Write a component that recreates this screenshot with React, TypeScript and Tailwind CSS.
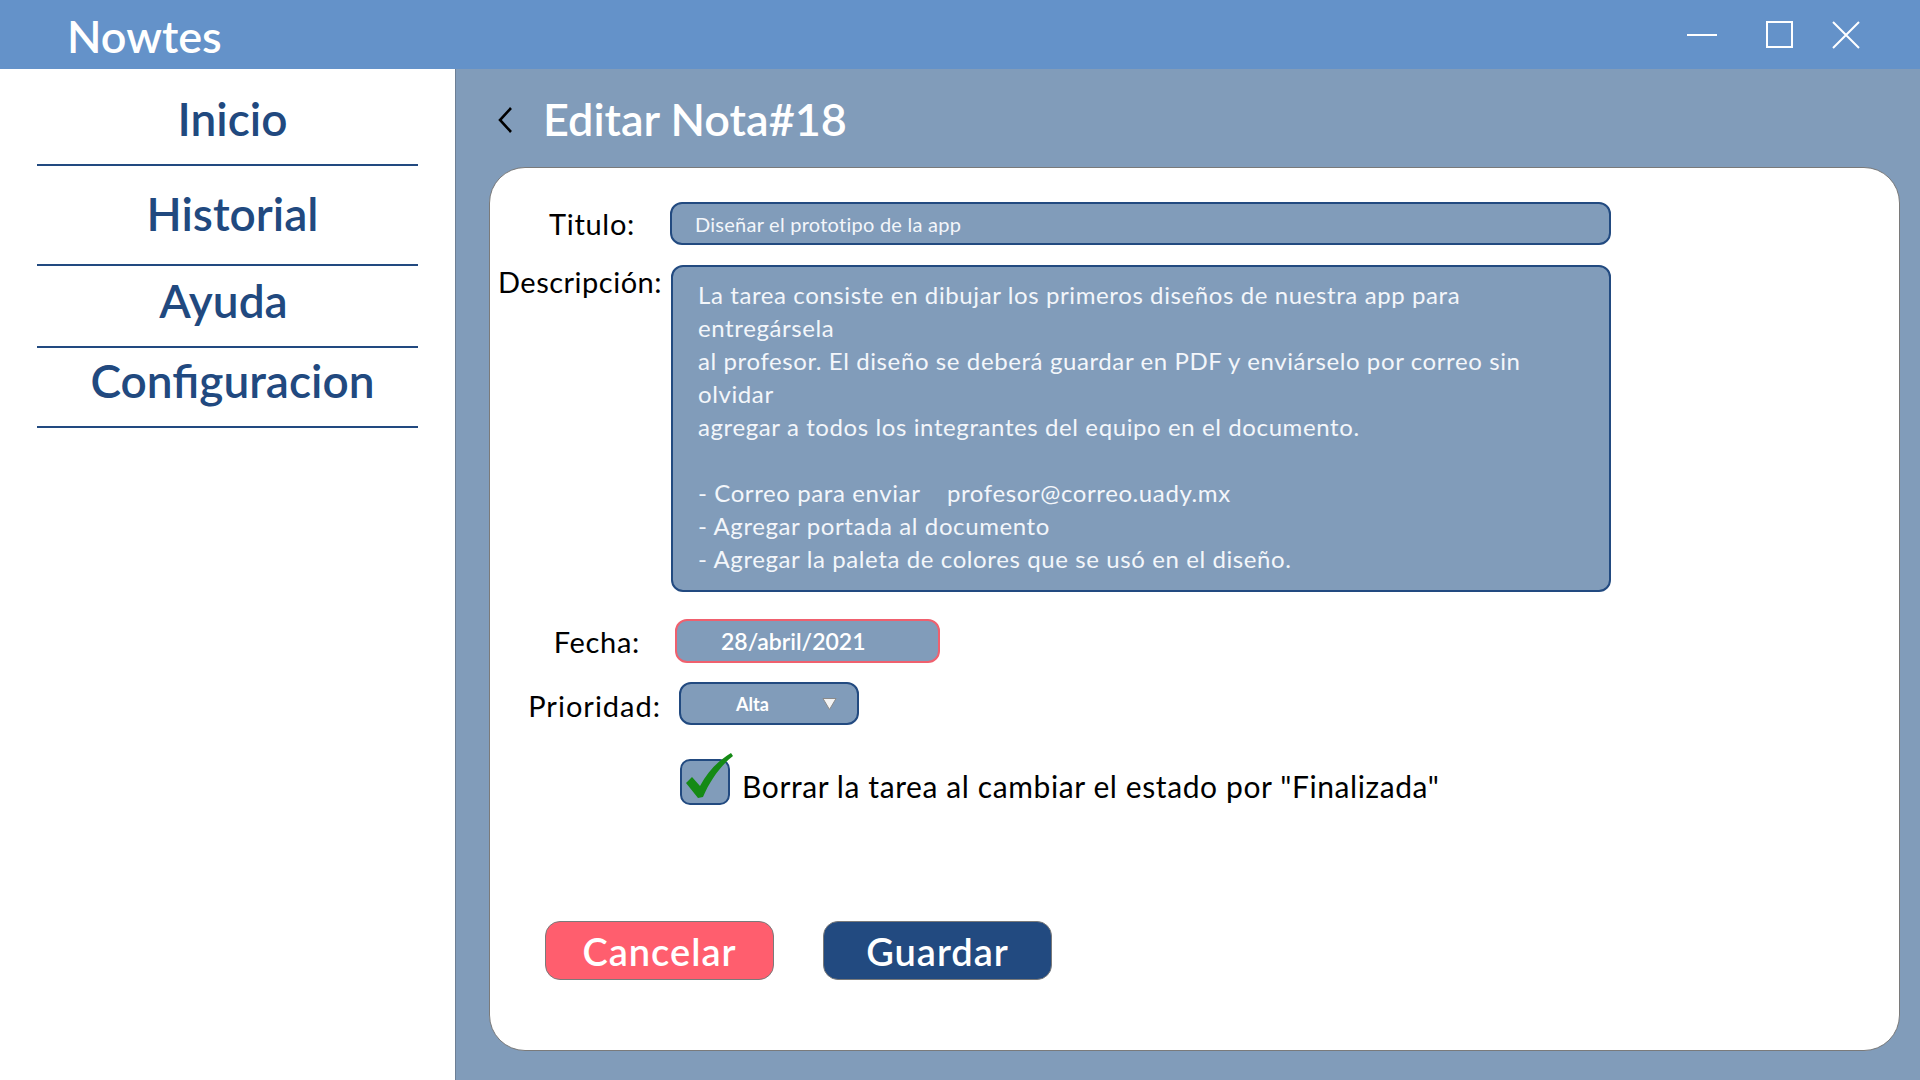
import React from 'react'

const navItems = [
  { label: 'Inicio', cls: 'pt-[27px] pb-[22px]' },
  { label: 'Historial', cls: 'pt-[25px] pb-[27px]' },
  { label: 'Ayuda', cls: 'pt-[12px] pb-[22px] pr-[18px]' },
  { label: 'Configuracion', cls: 'pt-[10px] pb-[22px]' },
]

const descLines = [
  'La tarea consiste en dibujar los primeros diseños de nuestra app para',
  'entregársela',
  'al profesor. El diseño se deberá guardar en PDF y enviárselo por correo sin',
  'olvidar',
  'agregar a todos los integrantes del equipo en el documento.',
  '',
  '- Correo para enviar\u00a0\u00a0\u00a0\u00a0profesor@correo.uady.mx',
  '- Agregar portada al documento',
  '- Agregar la paleta de colores que se usó en el diseño.',
]

function WindowControls() {
  return (
    <div className="flex items-center h-full">
      <svg width="32" height="4" viewBox="0 0 32 4" aria-hidden>
        <line x1="1" y1="2" x2="31" y2="2" stroke="white" strokeWidth="2" />
      </svg>
      <svg className="ml-[48px]" width="27" height="27" viewBox="0 0 27 27" aria-hidden>
        <rect x="1" y="1" width="25" height="25" fill="none" stroke="white" strokeWidth="2" />
      </svg>
      <svg className="ml-[39px] mr-[60px]" width="28" height="28" viewBox="0 0 28 28" aria-hidden>
        <path d="M1 1L27 27M27 1L1 27" stroke="white" strokeWidth="2" />
      </svg>
    </div>
  )
}

function Sidebar() {
  return (
    <aside className="w-[455px] bg-white shrink-0">
      <nav className="mx-[37px]">
        {navItems.map((item) => (
          <div
            key={item.label}
            className={`${item.cls} pl-[10px] border-b-2 border-[#224a80] text-center text-[46px] leading-[46px] font-semibold text-[#21497f]`}
          >
            {item.label}
          </div>
        ))}
      </nav>
    </aside>
  )
}

export default function App() {
  return (
    <div className="w-[1920px] h-[1080px] flex flex-col overflow-hidden font-['Lato',sans-serif]">
      <header className="h-[69px] bg-[#6492c9] flex items-center justify-between shrink-0">
        <span className="ml-[67px] mt-[4px] text-[45px] leading-none font-semibold text-white">Nowtes</span>
        <WindowControls />
      </header>

      <div className="flex flex-1 min-h-0">
        <Sidebar />

        <main className="flex-1 flex flex-col bg-[#819cba] border-l border-[#6d7f95] pl-[33px] pr-[20px] pb-[29px]">
          <div className="h-[98px] flex items-center shrink-0">
            <svg className="ml-[7px] mt-[4px]" width="19" height="28" viewBox="0 0 19 28" aria-hidden>
              <path d="M15 2L4 14L15 26" fill="none" stroke="black" strokeWidth="2.6" />
            </svg>
            <h1 className="ml-[28px] mt-[2px] text-[45px] leading-none font-semibold text-white">Editar Nota#18</h1>
          </div>

          <section className="flex-1 bg-white border border-[#7a7a7a] rounded-[36px] pt-[34px]">
            <div className="flex items-start">
              <label className="w-[180px] pr-[35px] text-right text-[29px] leading-[29px] tracking-[0.7px] text-black mt-[7px]">
                Titulo:
              </label>
              <div className="w-[941px] h-[43px] rounded-[12px] border-2 border-[#224a80] bg-[#819cba] flex items-center pl-[23px] text-[20px] leading-[20px] tracking-[0.25px] text-[#f3f6fa]">
                Diseñar el prototipo de la app
              </div>
            </div>

            <div className="flex items-start mt-[20px]">
              <label className="w-[181px] pl-[8px] text-left text-[29px] leading-[29px] tracking-[0.5px] text-black mt-[2px]">
                Descripción:
              </label>
              <div className="w-[940px] h-[327px] rounded-[12px] border-2 border-[#224a80] bg-[#819cba] pl-[25px] pt-[11px] text-[24px] leading-[33px] tracking-[0.6px] text-[#f3f6fa]">
                {descLines.map((line, i) => (
                  <div key={i} className="h-[33px] whitespace-pre">
                    {line}
                  </div>
                ))}
              </div>
            </div>

            <div className="flex items-start mt-[27px]">
              <label className="w-[185px] pr-[35px] text-right text-[29px] leading-[29px] tracking-[0.7px] text-black mt-[8px]">
                Fecha:
              </label>
              <div className="w-[265px] h-[44px] rounded-[12px] border-2 border-[#f0606e] bg-[#819cba] flex items-center pl-[44px] text-[23px] leading-[23px] font-semibold text-white">
                28/abril/2021
              </div>
            </div>

            <div className="flex items-start mt-[19px]">
              <label className="w-[189px] pr-[18px] text-right text-[29px] leading-[29px] tracking-[1px] text-black mt-[9px]">
                Prioridad:
              </label>
              <div className="w-[180px] h-[43px] rounded-[12px] border-2 border-[#224a80] bg-[#819cba] flex items-center pl-[55px] text-[18px] leading-[18px] font-bold text-white">
                <span>Alta</span>
                <svg className="ml-[53px]" width="15" height="14" viewBox="0 0 15 14" aria-hidden>
                  <path d="M1 1.5H14L7.5 12.5Z" fill="#f4f4f4" stroke="#8a8a8a" strokeWidth="1" />
                </svg>
              </div>
            </div>

            <div className="flex items-start mt-[34px]">
              <div className="ml-[190px] relative w-[50px] h-[46px] rounded-[10px] border-2 border-[#224a80] bg-[#819cba]">
                <svg className="absolute left-[2px] top-[-10px]" width="50" height="50" viewBox="0 0 50 50" aria-hidden>
                  <path d="M2 32L8 26L16 35C24 20 34 10 47 2L49 5C36 15 26 30 19 46L14 47Z" fill="#158a15" />
                </svg>
              </div>
              <span className="ml-[12px] mt-[12px] text-[30px] leading-[30px] tracking-[0.6px] text-black">
                Borrar la tarea al cambiar el estado por "Finalizada"
              </span>
            </div>

            <div className="flex items-center mt-[116px] ml-[55px] gap-[49px]">
              <button className="w-[229px] h-[59px] rounded-[15px] border border-[#7a7a7a] bg-[#ff5e6e] text-white text-[38px] leading-none tracking-[1px] font-semibold">
                Cancelar
              </button>
              <button className="w-[229px] h-[59px] rounded-[15px] border border-[#7a7a7a] bg-[#224a80] text-white text-[38px] leading-none tracking-[1px] font-semibold">
                Guardar
              </button>
            </div>
          </section>
        </main>
      </div>
    </div>
  )
}
